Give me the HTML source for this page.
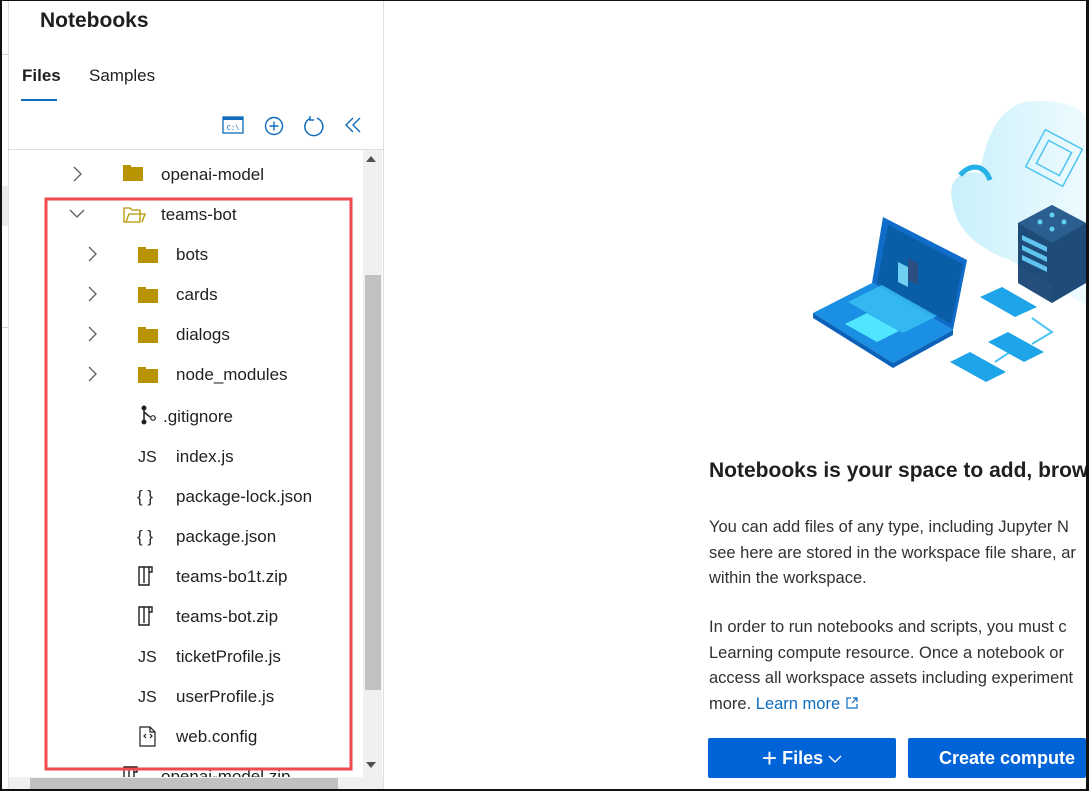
<!DOCTYPE html>
<html><head><meta charset="utf-8"><style>
*{margin:0;padding:0;box-sizing:border-box}
body{width:1089px;height:791px;overflow:hidden;background:#fff;font-family:"Liberation Sans",sans-serif;color:#201f1e;position:relative}
.a{position:absolute}
.p{position:absolute;left:709px;font-size:16.5px;line-height:25.5px;color:#323130;white-space:nowrap}
</style></head><body>
<div class="a" style="left:0;top:0;width:1089px;height:791px;border:2px solid #111;border-top:1px solid #111;z-index:10;pointer-events:none"></div>
<div class="a" style="left:1086px;top:0;width:2px;height:791px;background:#111;z-index:11"></div>
<div class="a" style="left:8px;top:0;width:1px;height:791px;background:#e1dfdd"></div>
<div class="a" style="left:0;top:54px;width:8px;height:1px;background:#d2d0ce"></div>
<div class="a" style="left:0;top:186px;width:8px;height:40px;background:#edebe9"></div>
<div class="a" style="left:0;top:327px;width:8px;height:1px;background:#d2d0ce"></div>
<div class="a" style="left:383px;top:0;width:1px;height:791px;background:#e1dfdd"></div>
<div class="a" style="left:40px;top:9px;font-size:21px;font-weight:bold;color:#201f1e">Notebooks</div>
<div class="a" style="left:22px;top:66px;font-size:17px;font-weight:bold">Files</div>
<div class="a" style="left:21px;top:99px;width:36px;height:2px;background:#0f6cbd"></div>
<div class="a" style="left:89px;top:66px;font-size:17px">Samples</div>
<svg class="a" style="left:222px;top:116px" width="22" height="18" viewBox="0 0 22 18"><rect x="1" y="1" width="20" height="16" fill="none" stroke="#0f6cbd" stroke-width="1.3"/><rect x="1" y="1" width="20" height="3" fill="#0f6cbd"/><text x="11" y="14" font-size="7" text-anchor="middle" fill="#0f6cbd" font-family="Liberation Mono">C:\</text></svg>
<svg class="a" style="left:264px;top:116px" width="20" height="20" viewBox="0 0 20 20"><circle cx="10" cy="10" r="8.5" fill="none" stroke="#0f6cbd" stroke-width="1.4"/><path d="M10 5.5v9M5.5 10h9" stroke="#0f6cbd" stroke-width="1.4"/></svg>
<svg class="a" style="left:302px;top:115px" width="24" height="24" viewBox="0 0 24 24"><path d="M8 3.5A9 9 0 1 0 15 3.2" fill="none" stroke="#0f6cbd" stroke-width="1.5"/><path d="M8 1v4h4" fill="none" stroke="#0f6cbd" stroke-width="1.4"/></svg>
<svg class="a" style="left:344px;top:117px" width="18" height="16" viewBox="0 0 18 16"><path d="M9 1L2 8l7 7M16 1L9 8l7 7" fill="none" stroke="#0f6cbd" stroke-width="1.4"/></svg>
<div class="a" style="left:9px;top:149px;width:374px;height:1px;background:#e1dfdd"></div>
<div class="a" style="left:363px;top:150px;width:19px;height:627px;background:#f0f0f0"></div>
<div class="a" style="left:366px;top:156px;width:0;height:0;border-left:5px solid transparent;border-right:5px solid transparent;border-bottom:6px solid #505050"></div>
<div class="a" style="left:365px;top:275px;width:16px;height:415px;background:#c1c1c1"></div>
<div class="a" style="left:366px;top:762px;width:0;height:0;border-left:5px solid transparent;border-right:5px solid transparent;border-top:6px solid #505050"></div>
<div class="a" style="left:9px;top:777px;width:354px;height:13px;background:#f0f0f0;z-index:3"></div>
<div class="a" style="left:30px;top:778px;width:308px;height:12px;background:#c1c1c1;z-index:4"></div>
<div class="a" style="left:363px;top:777px;width:20px;height:13px;background:#f0f0f0;z-index:3"></div>

<svg class="a" style="left:0;top:0" width="383" height="791" viewBox="0 0 383 791" font-family="Liberation Sans" font-size="17" fill="#201f1e">
<defs>
<g id="fc"><rect x="0" y="-7" width="20" height="14" fill="#b89500"/><rect x="0" y="-9" width="8" height="3" fill="#b89500"/></g>
<path id="chr" d="M-3 -7l7 7-7 7" fill="none" stroke="#605e5c" stroke-width="1.3"/>
<path id="zip" d="M-9 -9h10v18h-10z M-4 -9v16 M1 -9h3v5h-3" fill="none" stroke="#201f1e" stroke-width="1.4"/>
</defs>
<use href="#chr" x="77" y="174" style="stroke:#0f6cbd"/><use href="#fc" x="123" y="174"/><text x="161" y="180">openai-model</text>
<path d="M70 210l7 7 7-7" fill="none" stroke="#605e5c" stroke-width="1.3"/>
<path d="M124 208h6l2 2h8v12h-16z M126 222l3-8h16l-3 8" fill="none" stroke="#b89500" stroke-width="1.3"/><text x="161" y="220">teams-bot</text>
<use href="#chr" x="92" y="254"/><use href="#fc" x="138" y="256"/><text x="176" y="260">bots</text>
<use href="#chr" x="92" y="294"/><use href="#fc" x="138" y="296"/><text x="176" y="300">cards</text>
<use href="#chr" x="92" y="334"/><use href="#fc" x="138" y="336"/><text x="176" y="340">dialogs</text>
<use href="#chr" x="92" y="374"/><use href="#fc" x="138" y="376"/><text x="176" y="380">node_modules</text>
<circle cx="144" cy="408" r="2.5" fill="#201f1e"/><circle cx="144" cy="422" r="2.5" fill="#201f1e"/><path d="M144 408v14M144 412l6 5" stroke="#201f1e" stroke-width="1.5" fill="none"/><circle cx="153" cy="418" r="2.3" fill="none" stroke="#201f1e" stroke-width="1.2"/><text x="163" y="422">.gitignore</text>
<text x="138" y="462" font-size="16">JS</text><text x="176" y="462">index.js</text>
<text x="137" y="502" font-size="17">{ }</text><text x="176" y="502">package-lock.json</text>
<text x="137" y="542" font-size="17">{ }</text><text x="176" y="542">package.json</text>
<use href="#zip" x="148" y="576"/><text x="176" y="582">teams-bo1t.zip</text>
<use href="#zip" x="148" y="616"/><text x="176" y="622">teams-bot.zip</text>
<text x="138" y="662" font-size="16">JS</text><text x="176" y="662">ticketProfile.js</text>
<text x="138" y="702" font-size="16">JS</text><text x="176" y="702">userProfile.js</text>
<path d="M140 727h10l5 5v14h-15z M150 727v5h5 M146 734l-2 2 2 2 M150 734l2 2-2 2" fill="none" stroke="#201f1e" stroke-width="1.2"/><text x="176" y="742">web.config</text>
<use href="#zip" x="133" y="776"/><text x="161" y="782">openai-model.zip</text>
<rect x="46" y="199" width="305" height="570" fill="none" stroke="#f04a4f" stroke-width="3"/>
</svg>

<svg class="a" style="left:780px;top:80px" width="306" height="320" viewBox="0 0 306 320">
<defs><linearGradient id="cl" x1="0" x2="1"><stop offset="0" stop-color="#c8f0fb"/><stop offset="1" stop-color="#eefbfe"/></linearGradient></defs>
<path d="M172 120 C168 100 180 90 200 93 C205 60 218 28 245 22 C270 18 306 25 306 40 V225 L230 180 C200 170 175 150 172 120Z" fill="url(#cl)"/>
<path d="M180 95 C192 82 205 86 210 100" fill="none" stroke="#26b0e8" stroke-width="5"/>
<g fill="none" stroke="#4fc3f0" stroke-width="1.5"><rect x="253" y="57" width="42" height="42" transform="rotate(28 274 78)"/><rect x="261" y="65" width="26" height="26" transform="rotate(28 274 78)"/></g>
<path d="M238 143l34-18 34 18v60l-34 20-34-20z" fill="#1e4b78"/><path d="M238 143l34-18 34 18-34 20z" fill="#2a5f8f"/>
<path d="M238 185l34 20v18l-34-20z" fill="#244f7c"/>
<g fill="#5fc4ef"><path d="M242 155l25 12v5l-25-12z"/><path d="M242 165l25 12v5l-25-12z"/><path d="M242 175l25 12v5l-25-12z"/></g>
<g fill="#5fd1f2"><circle cx="272" cy="135" r="2.5"/><circle cx="260" cy="142" r="2.5"/><circle cx="284" cy="142" r="2.5"/><circle cx="272" cy="149" r="2.5"/></g>
<g stroke="#4fc3f0" stroke-width="2" fill="none"><path d="M240 220l-10 10M252 238l20 14-20 12M230 272l-15 10"/></g>
<path d="M200 217l22-10 35 20-22 10z" fill="#1ea4e8"/><path d="M208 262l20-10 36 20-20 10z" fill="#1ea4e8"/><path d="M170 282l20-10 36 20-20 10z" fill="#1ea4e8"/>
<path d="M103 137l84 43-14 70-81-47z" fill="#0f6cc8"/><path d="M108 145l75 39-12 60-74-41z" fill="#0a5ea8"/>
<path d="M118 182l10 5v20l-10-5z" fill="#6fd0f2"/><path d="M128 178l10 5v22l-10-5z" fill="#2a4f80"/>
<path d="M33 233l59-30 81 47-60 33z" fill="#1a8fe3"/><path d="M33 233v5l80 50 60-33v-5l-60 33z" fill="#0b62b8"/>
<path d="M65 244l22-11 32 18-22 11z" fill="#50e6ff"/>
<path d="M68 222l34-17 55 31-34 17z" fill="#3cc6f5" opacity=".75"/>
</svg>

<div class="a" style="left:709px;top:459px;font-size:21px;font-weight:bold;color:#201f1e;white-space:nowrap">Notebooks is your space to add, brow</div>
<div class="p" style="top:515px">You can add files of any type, including Jupyter N<br>see here are stored in the workspace file share, ar<br>within the workspace.</div>
<div class="p" style="top:615px">In order to run notebooks and scripts, you must c<br>Learning compute resource. Once a notebook or<br>access all workspace assets including experiment<br>more. <span style="color:#0f6cbd">Learn more</span> <svg width="14" height="14" viewBox="0 0 14 14" style="vertical-align:-1px"><path d="M6 2H2v10h10V8M8 2h4v4M12 2L7 7" fill="none" stroke="#0f6cbd" stroke-width="1.2"/></svg></div>
<div class="a" style="left:708px;top:738px;width:188px;height:40px;background:#0063d8;border-radius:2px;color:#fff;font-size:18px;font-weight:bold;line-height:40px;text-align:center"><span style="font-weight:normal;font-size:26px;vertical-align:-3px">+</span> Files <svg width="14" height="10" viewBox="0 0 14 10"><path d="M1 2l6 6 6-6" fill="none" stroke="#fff" stroke-width="1.4"/></svg></div>
<div class="a" style="left:908px;top:738px;width:178px;height:40px;background:#0063d8;border-radius:2px;color:#fff;font-size:18px;font-weight:bold;line-height:40px;padding-left:31px;white-space:nowrap;overflow:hidden">Create compute</div>
</body></html>
